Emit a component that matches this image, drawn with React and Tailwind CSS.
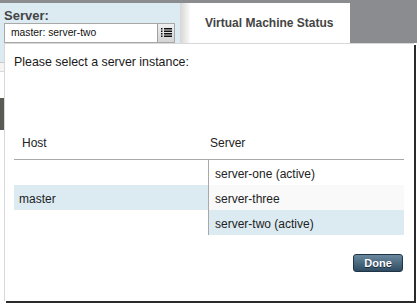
import React from "react";

function ListIcon() {
  return (
    <svg width="11" height="10" viewBox="0 0 11 10" className="block">
      {[0, 1, 2, 3].map((i) => (
        <g key={i}>
          <rect x="0" y={i * 2.5} width="1.5" height="1.5" fill="#111" />
          <rect x="3" y={i * 2.5} width="8" height="1.5" fill="#111" />
        </g>
      ))}
    </svg>
  );
}

export default function App() {
  return (
    <div className="relative w-[417px] h-[303px] overflow-hidden bg-white font-['Liberation_Sans',Arial,sans-serif]">
      {/* background page */}
      <div className="flex flex-col h-full">
        <div className="h-[3px] bg-[#8a8c8f]" />
        <div className="flex h-[40px]">
          <div className="w-[180px] bg-[#dcebf2] pl-[4px] pt-[5px] flex flex-col">
            <div className="text-[13px] leading-[15px] font-bold text-[#444]">Server:</div>
            <div className="mt-[0px] flex h-[22px] w-[171px] border border-[#a8a8a8] bg-white">
              <div className="flex-1 pl-[6px] pt-[2px] text-[10.3px] leading-[13px] text-[#111]">master: server-two</div>
              <div className="w-[17px] border-l border-[#a0a0a0] bg-gradient-to-b from-[#f0f0f0] to-[#d4d4d4] flex justify-center pt-[4px]">
                <ListIcon />
              </div>
            </div>
          </div>
          <div className="w-[10px] bg-gradient-to-r from-[#d6d6d6] to-[#fafafa]" />
          <div className="w-[160px] bg-white flex items-center pl-[15px] pb-[1px]">
            <span className="text-[12px] font-bold text-[#444] leading-[14px]">Virtual Machine Status</span>
          </div>
          <div className="flex-1 bg-[#8a8c8f]" />
        </div>
        <div className="w-[4px] flex flex-col flex-1">
          <div className="h-[20px] bg-[#dcebf2] border-b border-[#c8c8c8]" />
          <div className="h-[9px] bg-[#f4f4f4] border-b border-[#dadada]" />
          <div className="h-[26px] bg-white" />
          <div className="h-[32px] bg-[#5a5a55]" />
          <div className="flex-1 bg-white" />
        </div>
      </div>

      {/* dialog */}
      <div className="absolute left-[4px] top-[43px] w-[410px] h-[258px] bg-white border-l border-t border-[#d8d8d8] shadow-[2px_2px_0_0_#2a2a2a] flex flex-col">
        <div className="pl-[9px] pt-[11px] text-[12.4px] leading-[14px] text-[#1a1a1a]">
          Please select a server instance:
        </div>
        <div className="ml-[9px] mt-[67px] w-[390px] text-[12px] leading-[14px] text-[#222]">
          <div className="flex border-b border-[#a8a8a8] h-[24px]">
            <div className="w-[194px] pl-[8px] pt-[0px]">Host</div>
            <div className="flex-1 pl-[2px]">Server</div>
          </div>
          <div className="flex">
            <div className="w-[194px] flex flex-col">
              <div className="h-[25px]" />
              <div className="h-[25px] bg-[#dcebf2] pl-[5px] pt-[7px]">master</div>
              <div className="h-[25px]" />
            </div>
            <div className="flex-1 border-l border-[#a8a8a8] flex flex-col">
              <div className="h-[25px] bg-white pl-[6px] pt-[7px]">server-one (active)</div>
              <div className="h-[25px] bg-[#f9f9f9] pl-[6px] pt-[7px]">server-three</div>
              <div className="h-[25px] bg-[#dcebf2] pl-[6px] pt-[7px]">server-two (active)</div>
            </div>
          </div>
        </div>
        <div className="flex justify-end pr-[11px] mt-[19px]">
          <button className="w-[50px] h-[18px] rounded-[3px] border border-[#1f3447] bg-gradient-to-b from-[#6a899e] to-[#2f4c62] text-white text-[11px] font-bold leading-[14px] [text-shadow:0_1px_0_#1a2a38]">
            Done
          </button>
        </div>
      </div>
    </div>
  );
}
